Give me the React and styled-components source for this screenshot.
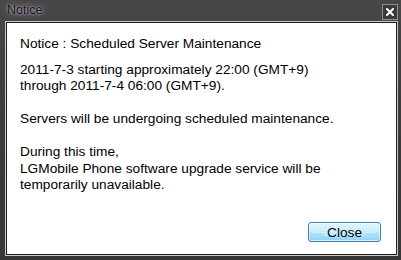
import React from "react";
import styled, { createGlobalStyle } from "styled-components";

const GlobalStyle = createGlobalStyle`
  html, body {
    margin: 0;
    padding: 0;
    background: #3d3d3d;
  }
`;

const Window = styled.div`
  width: 401px;
  height: 260px;
  display: flex;
  flex-direction: column;
  background: linear-gradient(180deg, #474747 0%, #3d3d3d 40%, #373737 100%);
  font-family: "Liberation Sans", Arial, sans-serif;
  box-sizing: border-box;
`;

const TitleBar = styled.div`
  height: 21px;
  display: flex;
  justify-content: space-between;
  align-items: flex-start;
  padding: 0 3px 0 7px;
  box-sizing: border-box;
  flex-shrink: 0;
`;

const Title = styled.span`
  font-size: 12.5px;
  line-height: 20px;
  color: #1e0c26;
  text-shadow: 0 0 3px rgba(235, 235, 245, 0.85), 0 0 8px rgba(200, 200, 210, 0.55);
`;

const XButton = styled.div`
  width: 16px;
  height: 16px;
  margin-top: 4px;
  box-sizing: border-box;
  border: 1px solid #909090;
  background: #3a3a3a;
  display: flex;
  align-items: center;
  justify-content: center;
`;

const Panel = styled.div`
  flex: 1;
  margin: 0 3px 4px 5px;
  border: 1px solid #c9c9c9;
  box-shadow: inset 0 0 0 1px #1e1e1e;
  background: #fff;
  padding: 1px;
  display: flex;
  flex-direction: column;
`;

const Message = styled.div`
  flex: 1;
  padding: 12.75px 13px 0;
  font-size: 13.7px;
  color: #000;
`;

const Heading = styled.div`
  line-height: 16.5px;
  margin-bottom: 9.5px;
`;

const Body = styled.div`
  line-height: 16.5px;
  white-space: pre-line;
`;

const Footer = styled.div`
  display: flex;
  justify-content: flex-end;
  padding: 0 15px 12px 0;
`;

const DialogButton = styled.button`
  position: relative;
  width: 73px;
  height: 20px;
  padding: 0;
  border: 1px solid #3c7fb1;
  border-radius: 3px;
  background: linear-gradient(
    180deg,
    #e2f5fe 0%,
    #cdeefc 45%,
    #ade2f9 55%,
    #8fd2f3 100%
  );
  box-shadow: inset 0 0 0 1px rgba(255, 255, 255, 0.6);
  font-family: "Liberation Sans", Arial, sans-serif;
  font-size: 13.7px;
  color: #000;
  cursor: default;

  &::before {
    content: "";
    position: absolute;
    left: 4px;
    right: 4px;
    top: 9px;
    height: 1px;
    background: repeating-linear-gradient(
      90deg,
      #ffffff 0 1px,
      transparent 1px 2px
    );
    opacity: 0.8;
  }

  span {
    position: relative;
    padding: 0 3px;
    background: linear-gradient(180deg, transparent 0 8px, #c4e9fa 8px 11px, transparent 11px);
  }
`;

const CloseGlyph = () => (
  <svg width="8" height="8" viewBox="0 0 8 8">
    <path d="M1 1 L7 7 M7 1 L1 7" stroke="#fff" strokeWidth="2" strokeLinecap="square" />
  </svg>
);

const body = `2011-7-3 starting approximately 22:00 (GMT+9)
through 2011-7-4 06:00 (GMT+9).

Servers will be undergoing scheduled maintenance.

During this time,
LGMobile Phone software upgrade service will be
temporarily unavailable.`;

export default function App() {
  return (
    <>
      <GlobalStyle />
      <Window>
        <TitleBar>
          <Title>Notice</Title>
          <XButton>
            <CloseGlyph />
          </XButton>
        </TitleBar>
        <Panel>
          <Message>
            <Heading>Notice : Scheduled Server Maintenance</Heading>
            <Body>{body}</Body>
          </Message>
          <Footer>
            <DialogButton>
              <span>Close</span>
            </DialogButton>
          </Footer>
        </Panel>
      </Window>
    </>
  );
}
